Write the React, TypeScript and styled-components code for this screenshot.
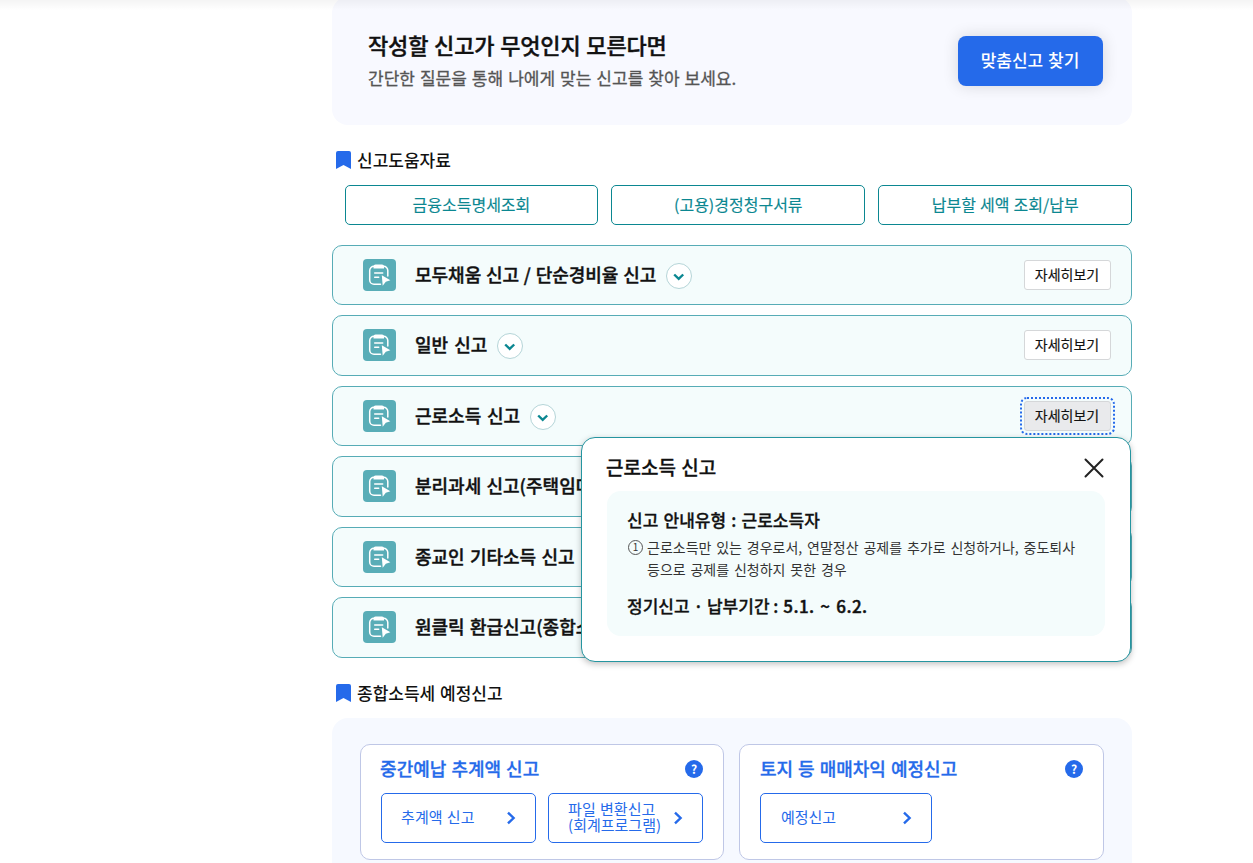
import React from "react";
import styled, { createGlobalStyle } from "styled-components";

const GlobalStyle = createGlobalStyle`
  * { box-sizing: border-box; }
  html, body { margin: 0; padding: 0; background: #fff; }
  body {
    height: 863px;
    overflow: hidden;
    font-family: "Noto Sans CJK KR", "Noto Sans", sans-serif;
    color: #111;
  }
  button { font: inherit; margin: 0; padding: 0; cursor: pointer; }
  h2, h3, h4, p { margin: 0; }
`;

const Page = styled.div`
  position: relative;
  height: 863px;
  overflow: hidden;
`;

const HeaderShadow = styled.div`
  position: absolute;
  inset: 0 0 auto 0;
  height: 10px;
  background: linear-gradient(rgba(0, 0, 0, 0.045), rgba(0, 0, 0, 0));
`;

const Content = styled.main`
  display: flow-root;
  width: 800px;
  margin-left: 332px;
`;

const Hero = styled.section`
  display: flex;
  justify-content: space-between;
  align-items: flex-start;
  height: 128px;
  margin-top: -3px;
  padding: 39px 29px 0 36px;
  border-radius: 16px;
  background: #f8f9ff;
`;

const HeroTitle = styled.h2`
  margin-top: -8px;
  font-size: 22px;
  line-height: 32px;
  font-weight: 500;
  letter-spacing: -0.15px;
  word-spacing: 1px;
  -webkit-text-stroke: 0.4px currentColor;
`;

const HeroText = styled.p`
  margin-top: 4px;
  font-size: 17px;
  line-height: 28px;
  word-spacing: 1.2px;
  color: #555;
  -webkit-text-stroke: 0.3px currentColor;
`;

const PrimaryButton = styled.button`
  width: 145px;
  height: 50px;
  padding: 0 1px 3px 0;
  border: 0;
  border-radius: 8px;
  background: #256aea;
  color: #fff;
  font-size: 17px;
  font-weight: 500;
  word-spacing: 1px;
  box-shadow: 0 0 16px rgba(0, 0, 0, 0.14);
`;

const SectionTitle = styled.h3<{ $top: number }>`
  display: flex;
  align-items: center;
  gap: 6px;
  height: 24px;
  margin-top: ${(p) => p.$top}px;
  padding-left: 4px;
  font-size: 17px;
  font-weight: 500;
  line-height: 24px;
  word-spacing: 1px;
`;

const HelpLinks = styled.div`
  display: grid;
  grid-template-columns: repeat(3, 1fr);
  gap: 13.2px;
  margin: 13px 0 0 12.6px;
`;

const HelpButton = styled.button`
  height: 40px;
  padding: 0 0 2px 0;
  border: 1px solid #0b8791;
  border-radius: 5px;
  background: #fff;
  color: #0b8791;
  font-size: 16px;
  word-spacing: 0.5px;
  -webkit-text-stroke: 0.15px currentColor;
`;

const ReportList = styled.div`
  display: flex;
  flex-direction: column;
  gap: 10px;
  margin-top: 20px;
`;

const ReportRow = styled.div`
  position: relative;
  display: flex;
  align-items: center;
  height: 60.47px;
  padding: 0 20px 0 30px;
  border: 1px solid #57acb6;
  border-radius: 10px;
  background: #f4fcfc;
`;

const ReportName = styled.h4<{ $wordSpacing: number }>`
  margin: -2.7px 10px 0 19px;
  font-size: 18px;
  line-height: 26px;
  font-weight: 500;
  white-space: nowrap;
  word-spacing: ${(p) => p.$wordSpacing}px;
  -webkit-text-stroke: 0.4px currentColor;
`;

const ToggleButton = styled.button`
  display: flex;
  align-items: center;
  justify-content: center;
  width: 26px;
  height: 26px;
  margin-top: 1.5px;
  padding-top: 2px;
  border: 1px solid #b5d5d8;
  border-radius: 50%;
  background: #fff;
`;

const DetailButton = styled.button<{ $focused?: boolean }>`
  width: 87px;
  height: 30px;
  margin: -0.7px 0 0 auto;
  padding: 0 1px 3px 0;
  border: 1px solid #d5d7d9;
  border-radius: 3px;
  background: ${(p) => (p.$focused ? "#e9eaec" : "#fff")};
  outline: ${(p) => (p.$focused ? "2px dotted #256aea" : "none")};
  outline-offset: 2px;
  color: #111;
  font-size: 14px;
  line-height: 26px;
  -webkit-text-stroke: 0.15px currentColor;
`;

const Popup = styled.div`
  position: absolute;
  z-index: 2;
  top: 50px;
  right: 0;
  width: 550px;
  height: 225px;
  padding: 14px 25px 25px;
  border: 1px solid #2595a0;
  border-radius: 14px;
  background: #fff;
  box-shadow: 0 2px 6px rgba(0, 0, 0, 0.25);
`;

const PopupHeader = styled.div`
  display: flex;
  align-items: center;
  justify-content: space-between;
  height: 32px;
  margin: 0 1px 0 -1px;
`;

const PopupTitle = styled.h4`
  padding-bottom: 2px;
  font-size: 19px;
  font-weight: 500;
  line-height: 30px;
  word-spacing: 1px;
  -webkit-text-stroke: 0.3px currentColor;
`;

const CloseButton = styled.button`
  display: flex;
  border: 0;
  background: none;
`;

const PopupBody = styled.div`
  height: 145px;
  margin-top: 7px;
  padding: 16px 20px 0;
  border-radius: 14px;
  background: #f4fcfc;
`;

const PopupStrong = styled.p<{ $wordSpacing: number }>`
  font-size: 17px;
  font-weight: 500;
  line-height: 26px;
  white-space: nowrap;
  word-spacing: ${(p) => p.$wordSpacing}px;
  -webkit-text-stroke: 0.3px currentColor;
`;

const PopupDates = styled.span`
  margin-left: 1px;
  letter-spacing: 0.45px;
  word-spacing: 1.5px;
  -webkit-text-stroke: 0.45px currentColor;
`;

const PopupItem = styled.div`
  display: flex;
  gap: 4px;
  margin: 3px 0 13px 1px;
  font-size: 14px;
  line-height: 22px;
  word-spacing: 1.7px;
  color: #333;
  white-space: nowrap;
`;

const ItemNumber = styled.span`
  display: flex;
  align-items: center;
  justify-content: center;
  width: 15px;
  height: 15px;
  margin-top: 4px;
  padding-bottom: 1px;
  border: 1px solid #555;
  border-radius: 50%;
  font-size: 10px;
  line-height: 13px;
`;

const Panel = styled.section`
  display: flex;
  gap: 15.2px;
  height: 170px;
  margin-top: 13px;
  padding: 26px 28px 26px 27.6px;
  border-radius: 16px;
  background: #f6f9ff;
`;

const Card = styled.article`
  flex: 1;
  height: 116px;
  padding: 9px 20px;
  border: 1px solid #bfc7e6;
  border-radius: 10px;
  background: #fff;
`;

const CardHeader = styled.div`
  display: flex;
  align-items: center;
  justify-content: space-between;
  height: 30px;
  color: #256aea;
`;

const CardTitle = styled.h4`
  margin-left: -0.5px;
  padding-bottom: 3px;
  font-size: 18px;
  font-weight: 500;
  line-height: 28px;
  word-spacing: 1px;
  -webkit-text-stroke: 0.3px currentColor;
`;

const CardActions = styled.div`
  display: flex;
  gap: 12px;
  margin-top: 9px;
`;

const ActionButton = styled.button<{ $width: number }>`
  display: flex;
  align-items: center;
  justify-content: space-between;
  width: ${(p) => p.$width}px;
  height: 50px;
  padding: 0 19px 0 19.5px;
  border: 1px solid #256aea;
  border-radius: 5px;
  background: #fff;
  color: #256aea;
  font-size: 15px;
  line-height: 16px;
  text-align: left;
  white-space: nowrap;
  word-spacing: 1px;
`;

const ActionLabel = styled.span`
  padding-bottom: 2px;
`;

const HelpBadge = styled.span`
  display: flex;
  align-items: center;
  justify-content: center;
  width: 18px;
  height: 18px;
  border-radius: 50%;
  background: #256aea;
  color: #fff;
  font-size: 12px;
  font-weight: 700;
  line-height: 18px;
`;

const ReportIconSvg = styled.svg`
  flex: none;
  margin-top: -0.7px;
`;

const BookmarkIcon = () => (
  <svg width="15" height="18" viewBox="0 0 15 18">
    <path d="M2 0h11a2 2 0 0 1 2 2v16l-7.500-4L0 18V2a2 2 0 0 1 2-2z" fill="#256aea" />
  </svg>
);

const ReportIcon = () => (
  <ReportIconSvg width="33" height="32" viewBox="0 0 33 32">
    <rect width="33" height="32" rx="4" fill="#59adb7" />
    <path
      d="M17.500 25.300H11a4.300 4.300 0 0 1-4.300-4.300V11.500A4.300 4.300 0 0 1 11 7.200h9.500a4.300 4.300 0 0 1 4.300 4.300V17"
      fill="none"
      stroke="#fff"
      strokeWidth="1.500"
      strokeLinecap="round"
    />
    <path d="M10.500 9.600V7.500a2 2 0 0 1 2-2h6.500a2 2 0 0 1 2 2v2.100z" fill="#fff" />
    <path d="M11.700 14h8M11.700 18.300h4" stroke="#fff" strokeWidth="1.500" strokeLinecap="round" />
    <path d="M18.800 16.300l8.600 4.900-4.600 1.600-3.100 3.900z" fill="#fff" />
  </ReportIconSvg>
);

const ChevronDown = () => (
  <svg width="12" height="8" viewBox="0 0 12 8">
    <path d="M1.200 1.500L5.700 5.900l4.500-4.400" fill="none" stroke="#0b8791" strokeWidth="2.400" />
  </svg>
);

const ChevronRight = () => (
  <svg width="10" height="14" viewBox="0 0 10 14">
    <path d="M2 1.600L7.600 7 2 12.400" fill="none" stroke="#256aea" strokeWidth="2.400" />
  </svg>
);

const CloseIcon = () => (
  <svg width="20" height="20" viewBox="0 0 20 20">
    <path d="M1.500 1.500l17 17M18.500 1.500l-17 17" stroke="#222" strokeWidth="2" strokeLinecap="round" />
  </svg>
);

const reports = [
  { name: "모두채움 신고 / 단순경비율 신고", wordSpacing: 0.7 },
  { name: "일반 신고", wordSpacing: 2 },
  { name: "근로소득 신고", wordSpacing: 1.6 },
  { name: "분리과세 신고(주택임대)", wordSpacing: 1.2 },
  { name: "종교인 기타소득 신고", wordSpacing: 1.2 },
  { name: "원클릭 환급신고(종합소득세)", wordSpacing: 1.2 },
];

const OPEN_REPORT = 2;

const ReportPopup = () => (
  <Popup>
    <PopupHeader>
      <PopupTitle>근로소득 신고</PopupTitle>
      <CloseButton aria-label="닫기">
        <CloseIcon />
      </CloseButton>
    </PopupHeader>
    <PopupBody>
      <PopupStrong $wordSpacing={1.4}>신고 안내유형 : 근로소득자</PopupStrong>
      <PopupItem>
        <ItemNumber>1</ItemNumber>
        <p>
          근로소득만 있는 경우로서, 연말정산 공제를 추가로 신청하거나, 중도퇴사
          <br />
          등으로 공제를 신청하지 못한 경우
        </p>
      </PopupItem>
      <PopupStrong $wordSpacing={0}>
        정기신고 · 납부기간 : <PopupDates>5.1. ~ 6.2.</PopupDates>
      </PopupStrong>
    </PopupBody>
  </Popup>
);

export default function App() {
  return (
    <Page>
      <GlobalStyle />
      <Content>
        <Hero>
          <div>
            <HeroTitle>작성할 신고가 무엇인지 모른다면</HeroTitle>
            <HeroText>간단한 질문을 통해 나에게 맞는 신고를 찾아 보세요.</HeroText>
          </div>
          <PrimaryButton>맞춤신고 찾기</PrimaryButton>
        </Hero>

        <SectionTitle $top={23}>
          <BookmarkIcon />
          신고도움자료
        </SectionTitle>
        <HelpLinks>
          <HelpButton>금융소득명세조회</HelpButton>
          <HelpButton>(고용)경정청구서류</HelpButton>
          <HelpButton>납부할 세액 조회/납부</HelpButton>
        </HelpLinks>

        <ReportList>
          {reports.map((report, i) => (
            <ReportRow key={report.name}>
              <ReportIcon />
              <ReportName $wordSpacing={report.wordSpacing}>{report.name}</ReportName>
              {i <= OPEN_REPORT && (
                <>
                  <ToggleButton aria-label="펼치기">
                    <ChevronDown />
                  </ToggleButton>
                  <DetailButton $focused={i === OPEN_REPORT}>자세히보기</DetailButton>
                </>
              )}
              {i === OPEN_REPORT && <ReportPopup />}
            </ReportRow>
          ))}
        </ReportList>

        <SectionTitle $top={23.2}>
          <BookmarkIcon />
          종합소득세 예정신고
        </SectionTitle>
        <Panel>
          <Card>
            <CardHeader>
              <CardTitle>중간예납 추계액 신고</CardTitle>
              <HelpBadge>?</HelpBadge>
            </CardHeader>
            <CardActions>
              <ActionButton $width={155}>
                <ActionLabel>추계액 신고</ActionLabel>
                <ChevronRight />
              </ActionButton>
              <ActionButton $width={155}>
                <ActionLabel>
                  파일 변환신고
                  <br />
                  (회계프로그램)
                </ActionLabel>
                <ChevronRight />
              </ActionButton>
            </CardActions>
          </Card>
          <Card>
            <CardHeader>
              <CardTitle>토지 등 매매차익 예정신고</CardTitle>
              <HelpBadge>?</HelpBadge>
            </CardHeader>
            <CardActions>
              <ActionButton $width={172}>
                <ActionLabel>예정신고</ActionLabel>
                <ChevronRight />
              </ActionButton>
            </CardActions>
          </Card>
        </Panel>
      </Content>
      <HeaderShadow />
    </Page>
  );
}
